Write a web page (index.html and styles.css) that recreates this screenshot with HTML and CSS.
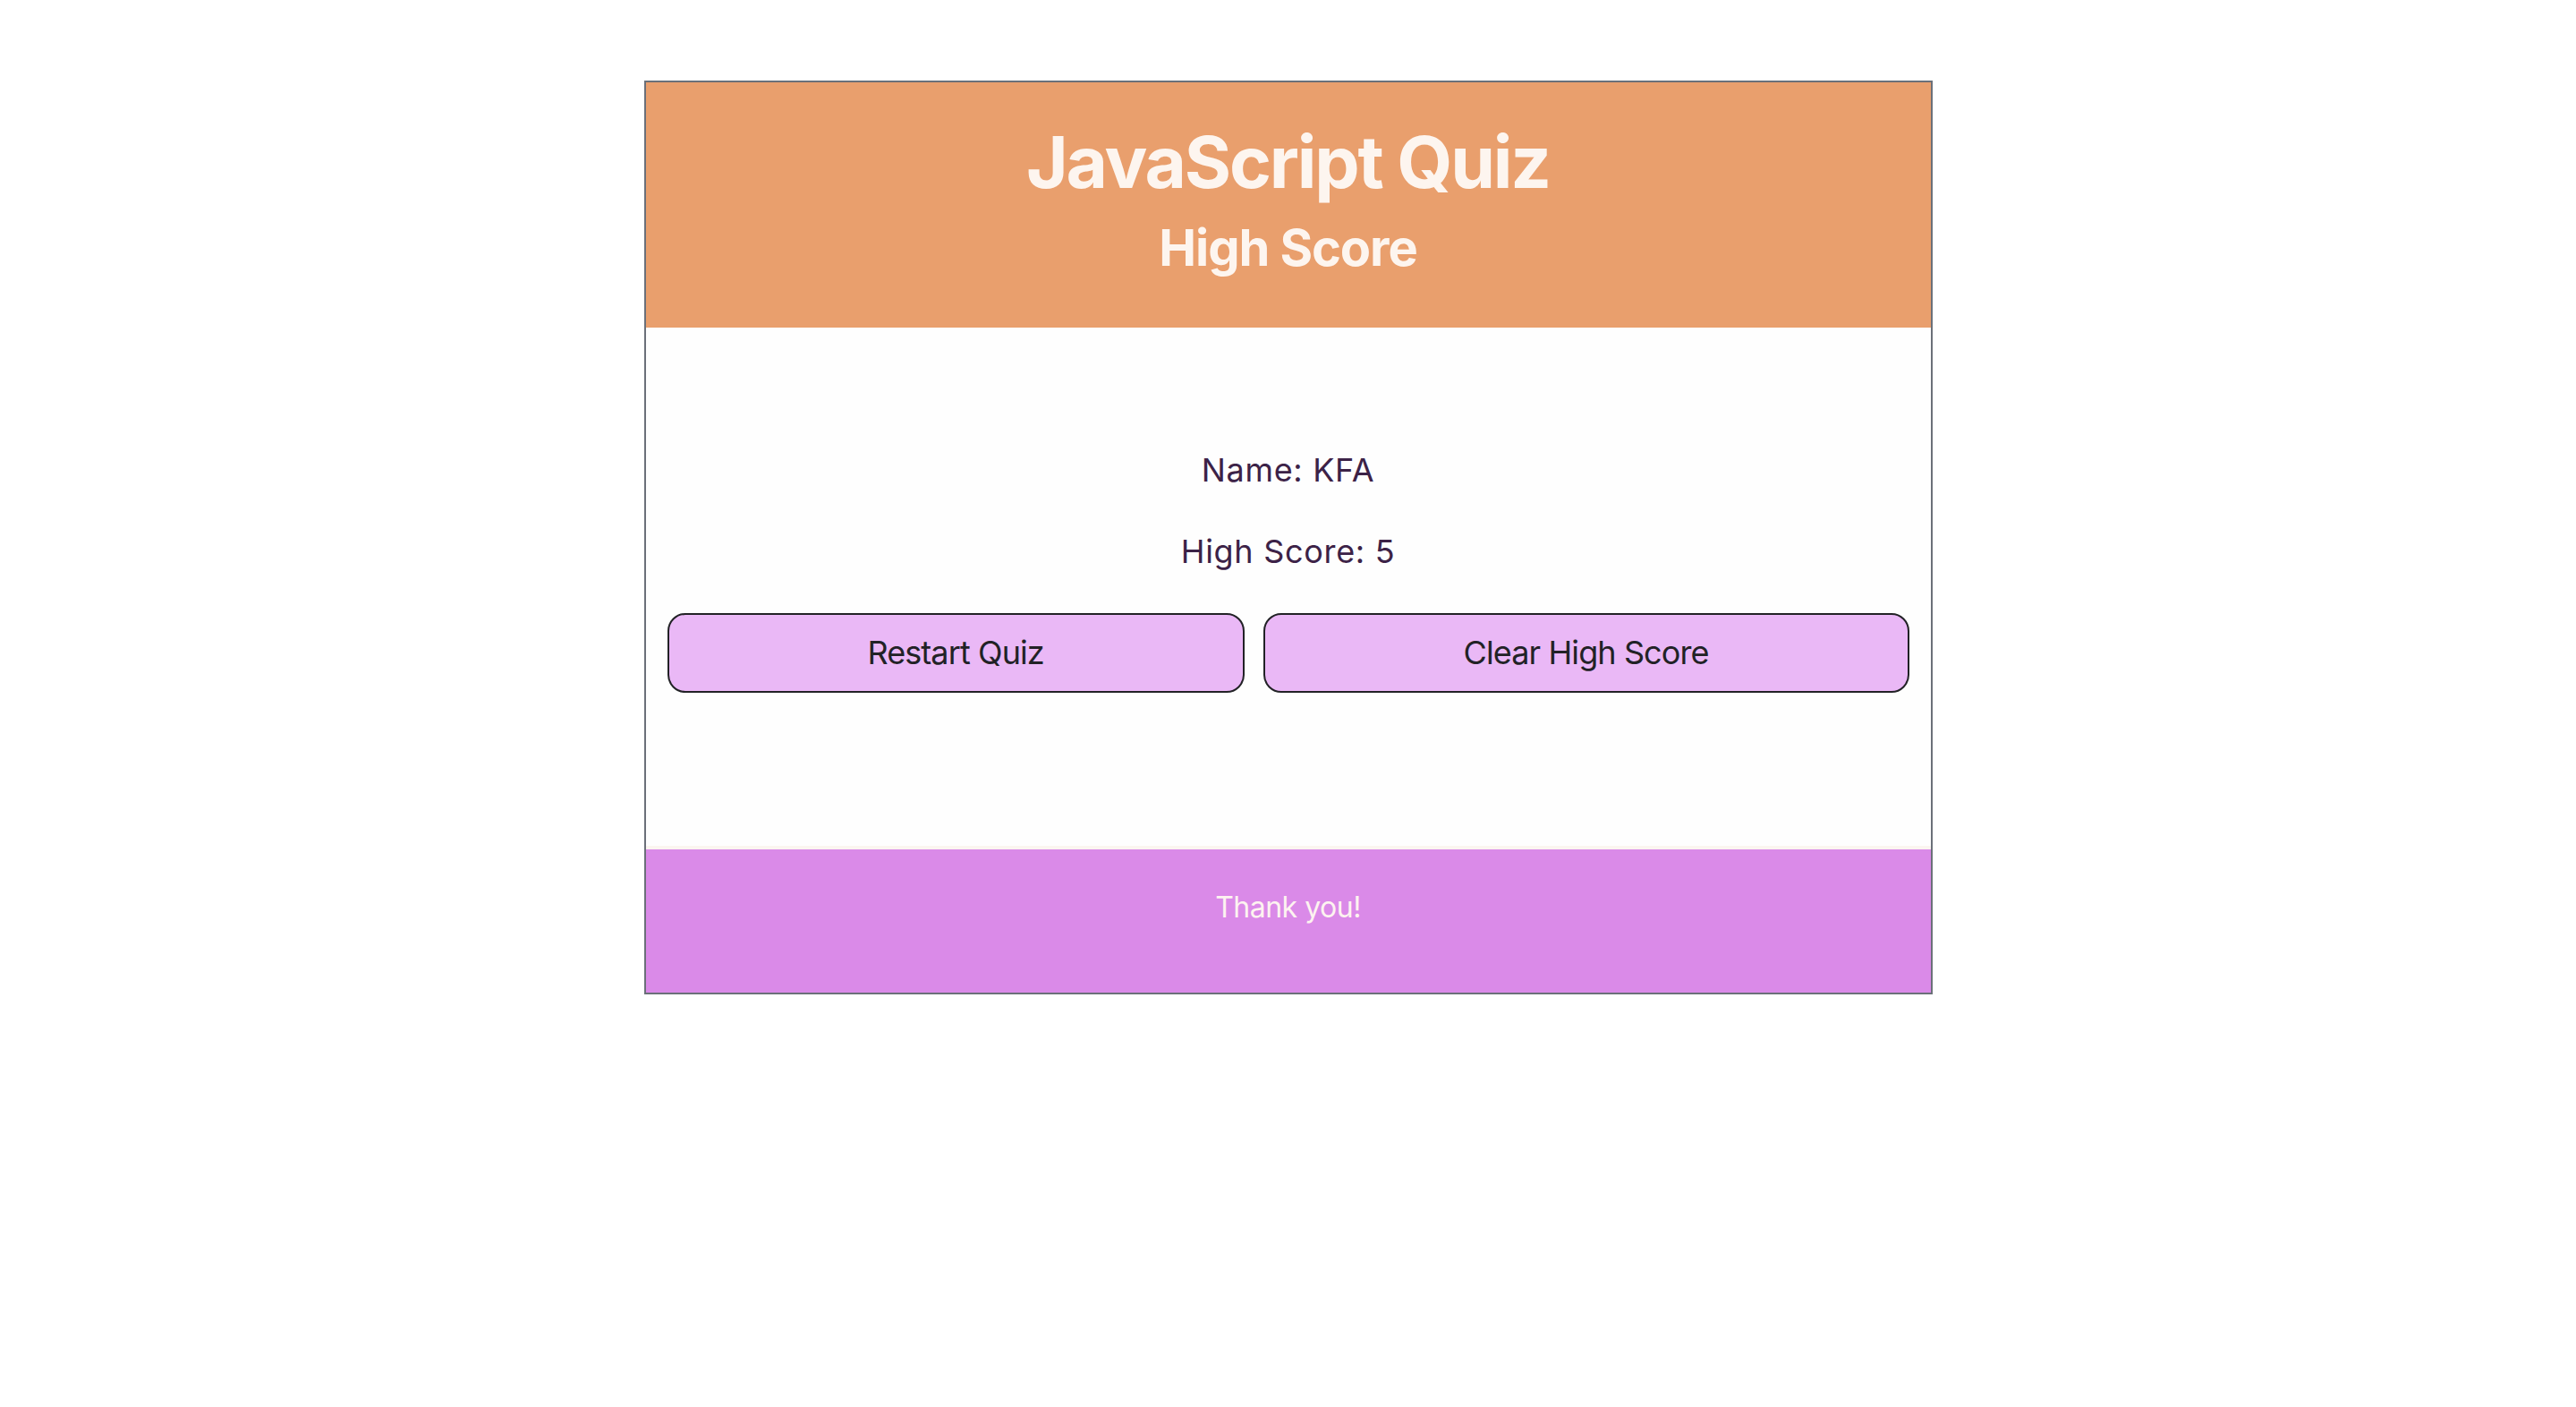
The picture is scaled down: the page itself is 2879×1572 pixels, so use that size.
FILE: index.html
```html
<!DOCTYPE html>
<html lang="en">
<head>
<meta charset="utf-8">
<title>JavaScript Quiz - High Score</title>
<link rel="stylesheet" href="styles.css">
</head>
<body>
<div class="quiz">
  <header class="quiz-header">
    <h1 class="quiz-title">JavaScript Quiz</h1>
    <h2 class="quiz-subtitle">High Score</h2>
  </header>
  <main class="quiz-main">
    <p class="score-line">Name: KFA</p>
    <p class="score-line">High Score: 5</p>
    <div class="actions">
      <button class="btn" type="button">Restart Quiz</button>
      <button class="btn" type="button">Clear High Score</button>
    </div>
  </main>
  <footer class="quiz-footer">
    <p class="footer-text">Thank you!</p>
  </footer>
</div>
</body>
</html>
```

FILE: styles.css
```css
* { box-sizing: border-box; }

html, body {
  margin: 0;
  padding: 0;
  background: #ffffff;
  font-family: Inter, "Noto Sans", "Liberation Sans", sans-serif;
}

.quiz {
  width: 1440px;
  margin: 90px auto 0;
  border: 2px solid #6b7079;
  display: flex;
  flex-direction: column;
}

.quiz-header {
  background: #e99f6d;
  color: #fdf5ef;
  text-align: center;
  padding: 40px 0 55px;
}

.quiz-title {
  margin: 0;
  font-size: 80px;
  line-height: 97px;
  font-weight: 700;
  letter-spacing: -2.2px;
}

.quiz-subtitle {
  margin: 14px 0 0;
  font-size: 56px;
  line-height: 68px;
  font-weight: 700;
  letter-spacing: -1.1px;
}

.quiz-main {
  background: #fefefe;
  padding: 137px 24px 171px;
  display: flex;
  flex-direction: column;
  align-items: stretch;
  gap: 47px;
  text-align: center;
}

.score-line {
  margin: 0;
  font-size: 36px;
  line-height: 44px;
  color: #3c2247;
  letter-spacing: 0.7px;
}

.actions {
  display: flex;
  gap: 21px;
}

.btn {
  flex: 1 1 auto;
  font-family: inherit;
  font-size: 36px;
  line-height: 44px;
  letter-spacing: -0.9px;
  padding: 20px 24px 21px;
  background: #eab8f6;
  color: #222226;
  border: 2px solid #222226;
  border-radius: 20px;
  cursor: pointer;
}

.quiz-footer {
  background: #da8ae8;
  border-top: 4px solid #fbf5f0;
  text-align: center;
  padding: 45px 0 76px;
}

.footer-text {
  margin: 0;
  font-size: 32px;
  line-height: 39px;
  color: #fdf3f0;
  letter-spacing: -0.5px;
}
```
